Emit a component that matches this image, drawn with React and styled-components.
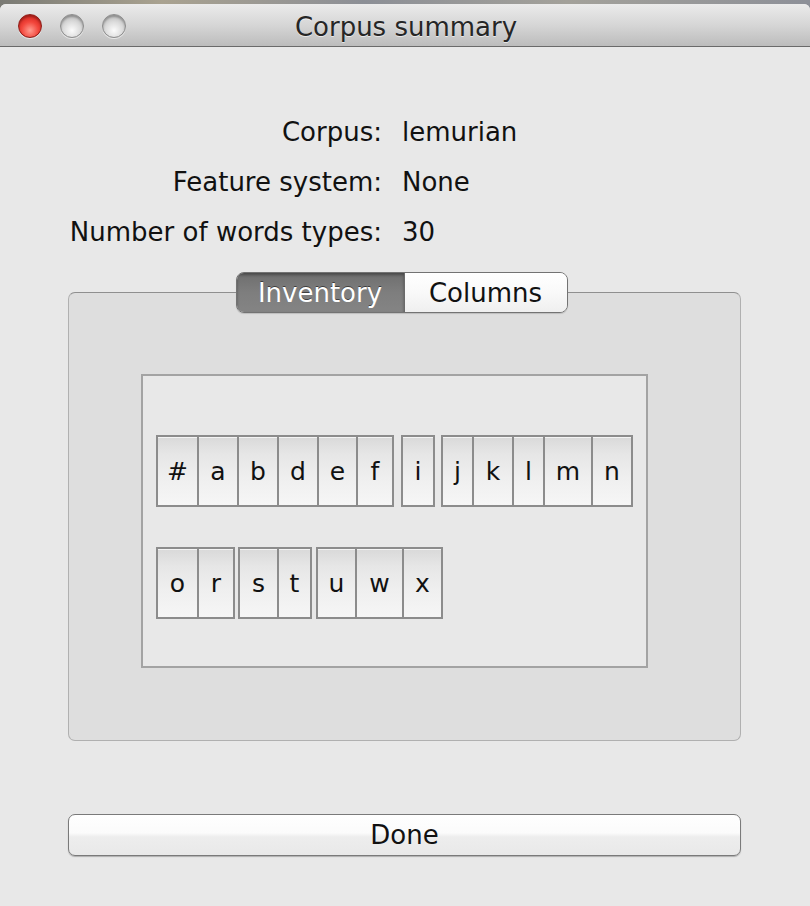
import React from "react";
import styled, { createGlobalStyle } from "styled-components";

const rows = [
  ["Corpus:", "lemurian"],
  ["Feature system:", "None"],
  ["Number of words types:", "30"]
];

// widths include the 2px border shared with the next key
const keyRows = [
  [
    { gap: 0, keys: [["#", 43], ["a", 42], ["b", 42], ["d", 42], ["e", 41], ["f", 38]] },
    { gap: 7, keys: [["i", 34]] },
    { gap: 6, keys: [["j", 33], ["k", 42], ["l", 33], ["m", 50], ["n", 42]] }
  ],
  [
    { gap: 0, keys: [["o", 43], ["r", 38]] },
    { gap: 3, keys: [["s", 41], ["t", 35]] },
    { gap: 4, keys: [["u", 41], ["w", 49], ["x", 41]] }
  ]
];

export default function App() {
  return (
    <>
      <GlobalStyle />
      <Window>
        <TitleBar>
          <Lights>
            <Light $color="red" />
            <Light />
            <Light />
          </Lights>
          <Title>Corpus summary</Title>
        </TitleBar>
        <Content>
          <InfoGrid>
            {rows.map(([label, value]) => (
              <React.Fragment key={label}>
                <Label>{label}</Label>
                <Value>{value}</Value>
              </React.Fragment>
            ))}
          </InfoGrid>

          <GroupBox>
            <TabBar>
              <Tab $active $w={167}>Inventory</Tab>
              <Tab $w={162}>Columns</Tab>
            </TabBar>
            <Frame>
              {keyRows.map((groups, i) => (
                <KeyRow key={i}>
                  {groups.map((g, j) => (
                    <KeyGroup key={j} $gap={g.gap}>
                      {g.keys.map(([ch, w]) => (
                        <Key key={ch} $w={w}>
                          {ch}
                        </Key>
                      ))}
                    </KeyGroup>
                  ))}
                </KeyRow>
              ))}
            </Frame>
          </GroupBox>

          <DoneButton type="button">Done</DoneButton>
        </Content>
      </Window>
    </>
  );
}

// ------- STYLES

const GlobalStyle = createGlobalStyle`
  html, body {
    margin: 0;
    padding: 0;
  }
  body {
    width: 810px;
    height: 906px;
    overflow: hidden;
    background: linear-gradient(90deg, #7a7a74, #a9a290 20%, #8c8f96 45%, #a3a19a 70%, #8d9098);
    font-family: "DejaVu Sans", "Liberation Sans", sans-serif;
    color: #111;
  }
`;

const Window = styled.div`
  margin-top: 4px;
  height: 902px;
  background: #e8e8e8;
  border-radius: 6px 6px 0 0;
  display: flex;
  flex-direction: column;
  overflow: hidden;
`;

const TitleBar = styled.div`
  position: relative;
  height: 42px;
  flex: none;
  display: flex;
  align-items: center;
  justify-content: center;
  background: linear-gradient(#ebebeb, #d6d6d6 50%, #bcbcbc);
  border-bottom: 1px solid #6a6a6a;
`;

const Lights = styled.div`
  position: absolute;
  left: 18px;
  top: 10px;
  display: flex;
  gap: 18px;
`;

const Light = styled.span`
  width: 24px;
  height: 24px;
  border-radius: 50%;
  box-sizing: border-box;
  border: 1px solid ${(p) => (p.$color === "red" ? "#8e1d18" : "#8d8d8d")};
  background: ${(p) =>
    p.$color === "red"
      ? "radial-gradient(circle at 50% 70%, #ff9b8f 0%, #f2463c 45%, #c2140f 100%)"
      : "radial-gradient(circle at 50% 70%, #fbfbfb 0%, #dcdcdc 45%, #a9a9a9 100%)"};
  box-shadow: inset 0 2px 2px rgba(0, 0, 0, 0.25), 0 1px 0 rgba(255, 255, 255, 0.6);
`;

const Title = styled.div`
  font-size: 26px;
  color: #262626;
  text-shadow: 0 1px 0 rgba(255, 255, 255, 0.6);
  margin: 4px 0 0 2px;
`;

const Content = styled.div`
  display: flex;
  flex-direction: column;
  padding: 60px 69px 0 68px;
`;

const InfoGrid = styled.div`
  display: grid;
  grid-template-columns: 314px auto;
  column-gap: 20px;
  font-size: 26px;
  line-height: 50px;
`;

const Label = styled.div`
  justify-self: end;
  white-space: nowrap;
`;

const Value = styled.div`
  white-space: nowrap;
`;

const GroupBox = styled.div`
  margin-top: 35px;
  height: 449px;
  box-sizing: border-box;
  border: 1px solid #b0b0b0;
  border-top-color: #8f8f8f;
  border-radius: 7px;
  background: #dedede;
  display: flex;
  flex-direction: column;
  align-items: center;
`;

const TabBar = styled.div`
  margin-top: -21px;
  margin-right: 6px;
  display: flex;
  height: 41px;
  box-sizing: border-box;
  border: 1px solid #737373;
  border-radius: 8px;
  overflow: hidden;
  box-shadow: 0 1px 1px rgba(0, 0, 0, 0.15);
`;

const Tab = styled.div`
  width: ${(p) => p.$w}px;
  display: flex;
  align-items: center;
  justify-content: center;
  font-size: 26px;
  color: ${(p) => (p.$active ? "#fff" : "#111")};
  text-shadow: ${(p) => (p.$active ? "0 -1px 0 rgba(0,0,0,0.5)" : "none")};
  background: ${(p) =>
    p.$active
      ? "linear-gradient(#6e6e6e, #7e7e7e 50%, #848484)"
      : "linear-gradient(#ffffff, #f9f9f9 50%, #efefef)"};
  box-shadow: ${(p) => (p.$active ? "inset 0 2px 3px rgba(0,0,0,0.35)" : "none")};
  & + & {
    border-left: 1px solid #6a6a6a;
  }
`;

const Frame = styled.div`
  align-self: flex-start;
  margin: 61px 0 0 72px;
  width: 507px;
  height: 294px;
  box-sizing: border-box;
  border: 2px solid #a3a3a3;
  background: #e8e8e8;
  padding: 59px 0 0 13px;
  display: flex;
  flex-direction: column;
  gap: 40px;
`;

const KeyRow = styled.div`
  display: flex;
`;

const KeyGroup = styled.div`
  display: flex;
  margin-left: ${(p) => p.$gap}px;
`;

const Key = styled.div`
  width: ${(p) => p.$w}px;
  height: 72px;
  box-sizing: border-box;
  border: 2px solid #8c8c8c;
  display: flex;
  align-items: center;
  justify-content: center;
  font-size: 25px;
  color: #111;
  background: linear-gradient(#d9d9d9, #e6e6e6 25%, #efefef 60%, #f6f6f6);
  box-shadow: inset 0 1px 0 #f4f4f4;
  & + & {
    margin-left: -2px;
  }
`;

const DoneButton = styled.button`
  margin-top: 73px;
  height: 42px;
  width: 100%;
  box-sizing: border-box;
  border: 1px solid #7a7a7a;
  border-radius: 7px;
  background: linear-gradient(#ffffff, #fbfbfb 45%, #ededed 55%, #e9e9e9);
  box-shadow: 0 1px 1px rgba(0, 0, 0, 0.25);
  font-family: inherit;
  font-size: 26px;
  color: #111;
  padding: 0;
  cursor: pointer;
`;
